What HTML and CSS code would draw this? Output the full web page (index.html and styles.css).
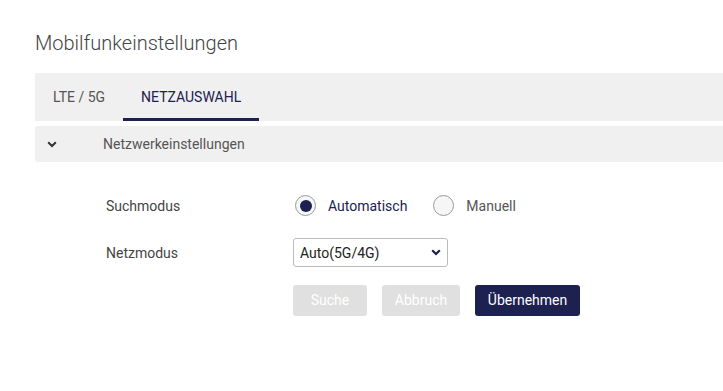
FILE: index.html
```html
<!DOCTYPE html>
<html lang="de">
<head>
  <meta charset="UTF-8">
  <title>Mobilfunkeinstellungen</title>
  <link rel="stylesheet" href="styles.css">
</head>
<body>
  <div class="page">
    <h1 class="title">Mobilfunkeinstellungen</h1>

    <div class="tabs">
      <div class="tab">LTE / 5G</div>
      <div class="tab active">NETZAUSWAHL</div>
    </div>

    <div class="panel-head">
      <svg class="chev" width="10" height="7" viewBox="0 0 10 7"><path d="M1.2 1.2 L5 5 L8.8 1.2" fill="none" stroke="#333" stroke-width="2"/></svg>
      <span>Netzwerkeinstellungen</span>
    </div>

    <div class="form">
      <div class="label">Suchmodus</div>
      <div class="radios">
        <label class="radio"><span class="dot checked"></span>Automatisch</label>
        <label class="radio off"><span class="dot"></span>Manuell</label>
      </div>

      <div class="label">Netzmodus</div>
      <div class="select">
        <span>Auto(5G/4G)</span>
        <svg width="10" height="7" viewBox="0 0 10 7"><path d="M1.2 1.2 L5 5 L8.8 1.2" fill="none" stroke="#1c2150" stroke-width="2.2"/></svg>
      </div>

      <div></div>
      <div class="buttons">
        <button class="btn disabled">Suche</button>
        <button class="btn disabled">Abbruch</button>
        <button class="btn primary">Übernehmen</button>
      </div>
    </div>
  </div>
</body>
</html>
```

FILE: styles.css
```css
body {
  margin: 0;
  font-family: 'Roboto', 'Liberation Sans', sans-serif;
  background: #fff;
  color: #444;
}

.page {
  padding: 32px 0 0 35px;
}

.title {
  margin: 0 0 18px;
  font-size: 20px;
  font-weight: 300;
  color: #444;
  line-height: 23px;
}

.tabs {
  display: flex;
  height: 48px;
  background: #f0f0f0;
}

.tab {
  padding: 0 18px;
  font-size: 14px;
  line-height: 48px;
  color: #555;
  box-sizing: border-box;
}

.tab.active {
  color: #1c2150;
  border-bottom: 3px solid #1c2150;
}

.panel-head {
  display: flex;
  align-items: center;
  height: 36px;
  margin-top: 5px;
  background: #f0f0f0;
  border-radius: 3px 0 0 3px;
  font-size: 14px;
  color: #555;
}

.chev {
  margin: 0 46px 0 12px;
}

.form {
  display: grid;
  grid-template-columns: 187px auto;
  grid-template-rows: 47px 47px 50px;
  align-items: center;
  padding: 20px 0 0 71px;
  font-size: 14px;
}

.label {
  color: #444;
}

.radios {
  display: flex;
  align-items: center;
  gap: 26px;
  padding-left: 2px;
}

.radio {
  display: flex;
  align-items: center;
  gap: 12px;
  color: #1c2150;
}

.radio.off {
  color: #555;
}

.dot {
  width: 19px;
  height: 19px;
  border: 1px solid #999;
  border-radius: 50%;
  background: #f6f6f6;
  position: relative;
}

.dot.checked::after {
  content: "";
  position: absolute;
  left: 3.5px;
  top: 3.5px;
  width: 12px;
  height: 12px;
  border-radius: 50%;
  background: #1c2150;
}

.select {
  display: flex;
  justify-content: space-between;
  align-items: center;
  width: 155px;
  height: 29px;
  box-sizing: border-box;
  padding: 0 6px 0 6px;
  border: 1px solid #bbb;
  border-radius: 3px;
  color: #222;
}

.buttons {
  display: flex;
  gap: 15px;
  margin-top: -2px;
}

.btn {
  height: 31px;
  padding: 0 12px;
  border: none;
  border-radius: 3px;
  font-family: inherit;
  font-size: 14px;
  color: #fff;
}

.btn.disabled {
  background: #e0e0e0;
  min-width: 74px;
}

.btn.disabled + .btn.disabled {
  min-width: 78px;
}

.btn.primary {
  background: #1c2150;
  min-width: 105px;
}
```
